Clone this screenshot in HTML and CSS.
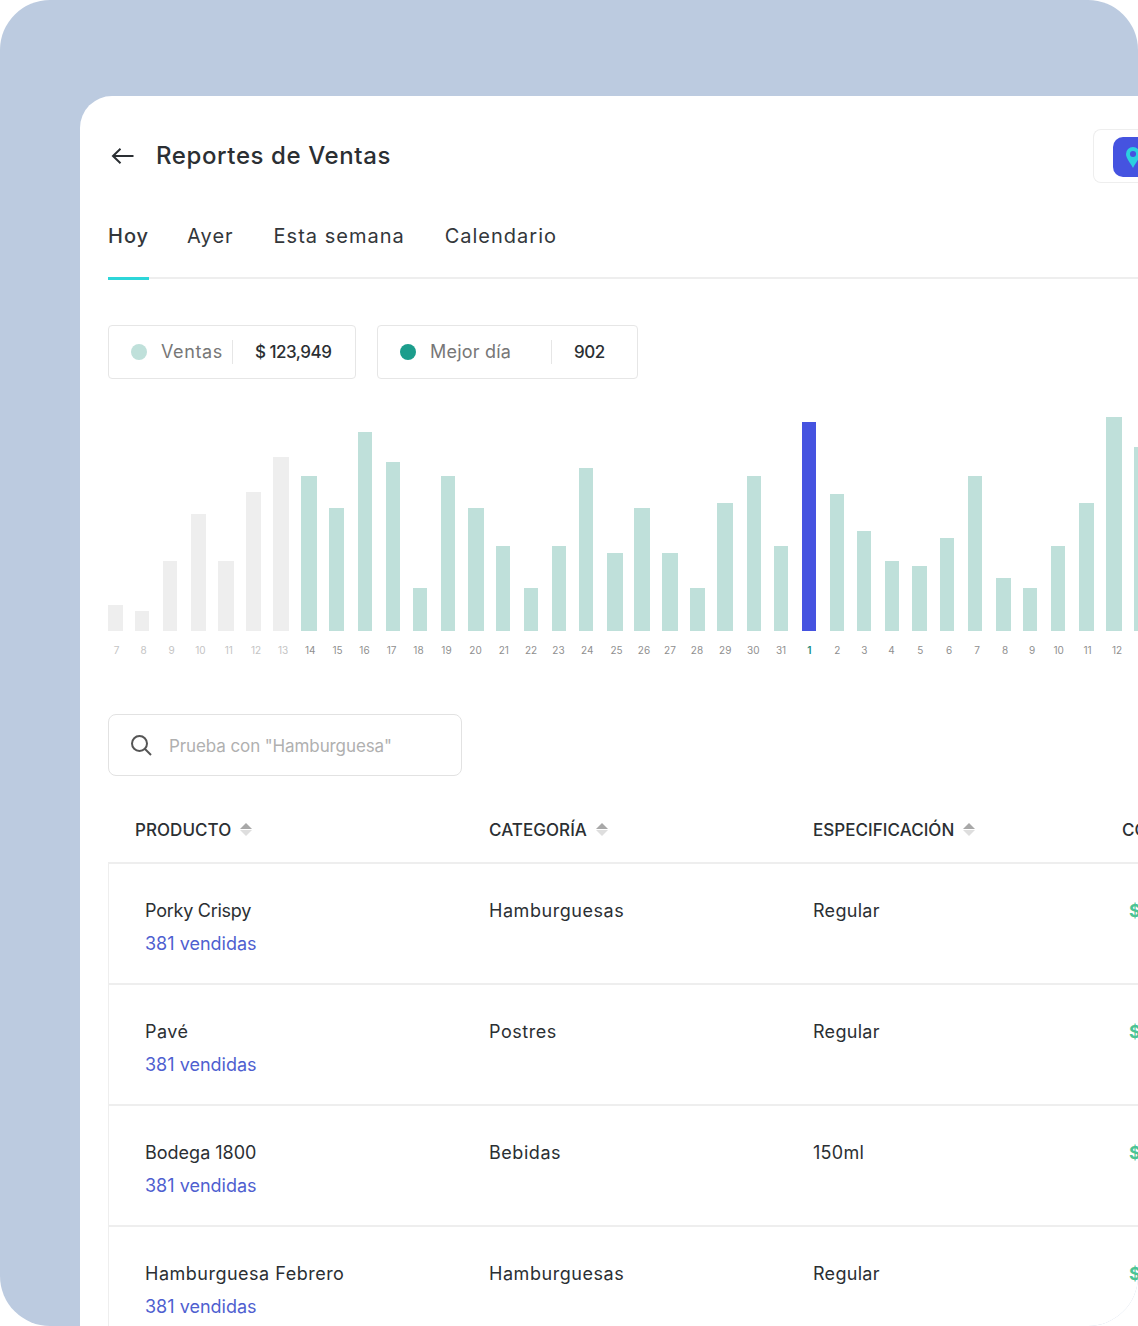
FILE: index.html
```html
<!DOCTYPE html>
<html>

<head>
    <title>Reportes de Ventas</title>
    <link rel="stylesheet" href="styles.css">
</head>

<body>
    <div class="frame">
        <div class="card">
            <div class="header">
                <div class="title-group">
                    <svg class="back-icon" width="23" height="18" viewBox="0 0 23 18">
                        <path d="M22.500 9H2M9.500 1.800 2 9l7.500 7.200" fill="none" stroke="#2b2f33" stroke-width="2"/>
                    </svg>
                    <h1>Reportes de Ventas</h1>
                </div>
                <div class="location">
                    <div class="location-btn">
                        <svg width="14" height="21" viewBox="0 0 16 24">
                            <path d="M8 0a8 8 0 0 1 8 8c0 5-5 10-8 16C5 18 0 13 0 8a8 8 0 0 1 8-8z" fill="#2bd0e0"/>
                            <circle cx="8" cy="8" r="3.500" fill="#4553e0"/>
                        </svg>
                    </div>
                </div>
            </div>

            <div class="tabs">
                <span class="tab active">Hoy</span>
                <span class="tab">Ayer</span>
                <span class="tab">Esta semana</span>
                <span class="tab">Calendario</span>
            </div>

            <div class="stats">
                <div class="stat stat-sales">
                    <span class="dot dot-light"></span>
                    <span class="stat-label">Ventas</span>
                    <span class="stat-value">$ 123,949</span>
                </div>
                <div class="stat stat-best">
                    <span class="dot dot-dark"></span>
                    <span class="stat-label">Mejor día</span>
                    <span class="stat-value">902</span>
                </div>
            </div>

            <div class="chart">
                <div class="bar old" style="height: 26px; width: 15px; margin-right: 12px"></div>
                <div class="bar old" style="height: 20px; width: 14px; margin-right: 14px"></div>
                <div class="bar old" style="height: 70px; width: 14px; margin-right: 14px"></div>
                <div class="bar old" style="height: 117px; width: 15px; margin-right: 12px"></div>
                <div class="bar old" style="height: 70px; width: 16px; margin-right: 12px"></div>
                <div class="bar old" style="height: 139px; width: 15px; margin-right: 12px"></div>
                <div class="bar old" style="height: 174px; width: 16px; margin-right: 12px"></div>
                <div class="bar" style="height: 155px; width: 16px; margin-right: 12px"></div>
                <div class="bar" style="height: 123px; width: 15px; margin-right: 14px"></div>
                <div class="bar" style="height: 199px; width: 14px; margin-right: 14px"></div>
                <div class="bar" style="height: 169px; width: 14px; margin-right: 13px"></div>
                <div class="bar" style="height: 43px; width: 14px; margin-right: 14px"></div>
                <div class="bar" style="height: 155px; width: 14px; margin-right: 13px"></div>
                <div class="bar" style="height: 123px; width: 16px; margin-right: 12px"></div>
                <div class="bar" style="height: 85px; width: 14px; margin-right: 14px"></div>
                <div class="bar" style="height: 43px; width: 14px; margin-right: 14px"></div>
                <div class="bar" style="height: 85px; width: 14px; margin-right: 13px"></div>
                <div class="bar" style="height: 163px; width: 14px; margin-right: 14px"></div>
                <div class="bar" style="height: 78px; width: 16px; margin-right: 11px"></div>
                <div class="bar" style="height: 123px; width: 16px; margin-right: 12px"></div>
                <div class="bar" style="height: 78px; width: 16px; margin-right: 12px"></div>
                <div class="bar" style="height: 43px; width: 15px; margin-right: 12px"></div>
                <div class="bar" style="height: 128px; width: 16px; margin-right: 14px"></div>
                <div class="bar" style="height: 155px; width: 14px; margin-right: 13px"></div>
                <div class="bar" style="height: 85px; width: 14px; margin-right: 14px"></div>
                <div class="bar today" style="height: 209px; width: 14px; margin-right: 14px"></div>
                <div class="bar" style="height: 137px; width: 14px; margin-right: 13px"></div>
                <div class="bar" style="height: 100px; width: 14px; margin-right: 14px"></div>
                <div class="bar" style="height: 70px; width: 14px; margin-right: 13px"></div>
                <div class="bar" style="height: 65px; width: 15px; margin-right: 13px"></div>
                <div class="bar" style="height: 93px; width: 14px; margin-right: 14px"></div>
                <div class="bar" style="height: 155px; width: 14px; margin-right: 14px"></div>
                <div class="bar" style="height: 53px; width: 15px; margin-right: 12px"></div>
                <div class="bar" style="height: 43px; width: 14px; margin-right: 14px"></div>
                <div class="bar" style="height: 85px; width: 14px; margin-right: 14px"></div>
                <div class="bar" style="height: 128px; width: 15px; margin-right: 12px"></div>
                <div class="bar" style="height: 214px; width: 16px; margin-right: 12px"></div>
                <div class="bar" style="height: 184px; width: 15px; margin-right: 12px"></div>
            </div>

            <div class="days">
                <span class="old" style="width: 27px">7</span>
                <span class="old" style="width: 27px">8</span>
                <span class="old" style="width: 29px">9</span>
                <span class="old" style="width: 29px">10</span>
                <span class="old" style="width: 27.500px">11</span>
                <span class="old" style="width: 27px">12</span>
                <span class="old" style="width: 27px">13</span>
                <span style="width: 27.500px">14</span>
                <span style="width: 27px">15</span>
                <span style="width: 27px">16</span>
                <span style="width: 27px">17</span>
                <span style="width: 27px">18</span>
                <span style="width: 29px">19</span>
                <span style="width: 29px">20</span>
                <span style="width: 27.500px">21</span>
                <span style="width: 27px">22</span>
                <span style="width: 28px">23</span>
                <span style="width: 29.500px">24</span>
                <span style="width: 29px">25</span>
                <span style="width: 26px">26</span>
                <span style="width: 26px">27</span>
                <span style="width: 28px">28</span>
                <span style="width: 28.500px">29</span>
                <span style="width: 27.500px">30</span>
                <span style="width: 28px">31</span>
                <span class="today" style="width: 28.500px">1</span>
                <span style="width: 27.500px">2</span>
                <span style="width: 26.500px">3</span>
                <span style="width: 28px">4</span>
                <span style="width: 29.500px">5</span>
                <span style="width: 28px">6</span>
                <span style="width: 28px">7</span>
                <span style="width: 28px">8</span>
                <span style="width: 26px">9</span>
                <span style="width: 27.500px">10</span>
                <span style="width: 30px">11</span>
                <span style="width: 29px">12</span>
            </div>

            <div class="search">
                <svg width="22" height="22" viewBox="0 0 22 22">
                    <circle cx="9.500" cy="9.500" r="7.500" fill="none" stroke="#555" stroke-width="2"/>
                    <path d="M15 15l6 6" stroke="#555" stroke-width="2"/>
                </svg>
                <span class="placeholder">Prueba con "Hamburguesa"</span>
            </div>

            <div class="table-head">
                <div class="head-cell">PRODUCTO <span class="sort"><i class="up"></i><i class="down"></i></span></div>
                <div class="head-cell">CATEGORÍA <span class="sort"><i class="up"></i><i class="down"></i></span></div>
                <div class="head-cell">ESPECIFICACIÓN <span class="sort"><i class="up"></i><i class="down"></i></span></div>
                <div class="head-cell">COSTO</div>
            </div>

            <div class="table-body">
                <div class="row">
                    <div class="product">
                        <div class="name-tight">Porky Crispy</div>
                        <div class="sold">381 vendidas</div>
                    </div>
                    <div class="category">Hamburguesas</div>
                    <div class="spec">Regular</div>
                    <div class="price">$120</div>
                </div>
                <div class="row">
                    <div class="product">
                        <div class="name-wide">Pavé</div>
                        <div class="sold">381 vendidas</div>
                    </div>
                    <div class="category">Postres</div>
                    <div class="spec">Regular</div>
                    <div class="price">$120</div>
                </div>
                <div class="row">
                    <div class="product">
                        <div>Bodega 1800</div>
                        <div class="sold">381 vendidas</div>
                    </div>
                    <div class="category">Bebidas</div>
                    <div class="spec">150ml</div>
                    <div class="price">$120</div>
                </div>
                <div class="row">
                    <div class="product">
                        <div class="name-wide">Hamburguesa Febrero</div>
                        <div class="sold">381 vendidas</div>
                    </div>
                    <div class="category">Hamburguesas</div>
                    <div class="spec">Regular</div>
                    <div class="price">$120</div>
                </div>
            </div>
        </div>
    </div>
</body>

</html>
```

FILE: styles.css
```css
html,
body {
    margin: 0;
    height: 1326px;
    overflow: hidden;
    background-color: white;
    font-family: Inter, Arial, sans-serif;
    color: #2b2f33;
}

.frame {
    width: 1138px;
    height: 1326px;
    box-sizing: border-box;
    padding: 96px 0 0 80px;
    background-color: #bccbe0;
    border-radius: 50px;
    overflow: hidden;
}

.card {
    width: 1058px;
    height: 1230px;
    box-sizing: border-box;
    padding: 33px 0 0 28px;
    background-color: white;
    border-radius: 32px 0 0 0;
    overflow: hidden;
}

.header {
    display: flex;
    justify-content: space-between;
    align-items: center;
    height: 54px;
}

.title-group {
    display: flex;
    align-items: center;
    gap: 22px;
    padding-left: 3px;
}

h1 {
    margin: 0 0 2px;
    font-size: 24px;
    font-weight: 500;
    letter-spacing: 0.6px;
}

.location {
    width: 45px;
    height: 54px;
    box-sizing: border-box;
    padding: 7px 0 0 19px;
    border: 1px solid #eeeeee;
    border-right: none;
    border-radius: 8px 0 0 8px;
}

.location-btn {
    width: 60px;
    height: 40px;
    display: flex;
    align-items: center;
    padding-left: 13px;
    box-sizing: border-box;
    background-color: #4553e0;
    border-radius: 10px 0 0 10px;
}

.tabs {
    display: flex;
    gap: 40px;
    margin-top: 26px;
    height: 68px;
    border-bottom: 2px solid #eeeeee;
    box-sizing: content-box;
}

.tab {
    height: 68px;
    box-sizing: content-box;
    padding-top: 12px;
    font-size: 20px;
    line-height: 30px;
    letter-spacing: 1px;
    color: #33373b;
}

.tab.active {
    height: 41px;
    margin-right: -2px;
    padding-top: 12px;
    padding-bottom: 15px;
    font-weight: 500;
    border-bottom: 3px solid #2dd6d9;
}

.stats {
    display: flex;
    gap: 21px;
    margin-top: 46px;
}

.stat {
    display: flex;
    align-items: center;
    height: 54px;
    box-sizing: border-box;
    border: 1px solid #e6e6e6;
    border-radius: 4px;
    font-size: 18px;
}

.stat-sales {
    width: 248px;
}

.stat-best {
    width: 261px;
}

.dot {
    flex: none;
    width: 16px;
    height: 16px;
    margin: 0 14px 0 22px;
    border-radius: 50%;
}

.dot-light {
    background-color: #bfe0da;
}

.dot-dark {
    background-color: #1c9d8c;
}

.stat-label {
    color: #777777;
    height: 24px;
    line-height: 24px;
    border-right: 1px solid #e6e6e6;
}

.stat-sales .stat-label {
    width: 71px;
    letter-spacing: 0.6px;
}

.stat-best .stat-label {
    width: 121px;
    letter-spacing: 0.2px;
}

.stat-value {
    padding-left: 22px;
    font-size: 17px;
    font-weight: 500;
    letter-spacing: -0.5px;
    color: #2b2f33;
}

.chart {
    display: flex;
    align-items: flex-end;
    height: 214px;
    margin-top: 38px;
    width: 1060px;
}

.bar {
    flex: none;
    background-color: #bfe0da;
}

.bar.old {
    background-color: #eeeeee;
}

.bar.today {
    background-color: #4553e0;
}

.days {
    display: flex;
    margin: 11px 0 0 -5px;
    font-size: 10px;
    line-height: 16px;
    color: #8f8f8f;
}

.days span {
    flex: none;
    text-align: center;
}

.days .old {
    color: #c4c4c4;
}

.days .today {
    color: #1c8c7c;
    font-weight: 600;
}

.search {
    display: flex;
    align-items: center;
    gap: 17px;
    width: 354px;
    height: 62px;
    box-sizing: border-box;
    margin-top: 56px;
    padding-left: 21px;
    border: 1.500px solid #e2e2e2;
    border-radius: 8px;
}

.placeholder {
    padding-top: 1px;
    font-size: 17px;
    letter-spacing: -0.1px;
    color: #b0b0b0;
}

.table-head,
.row {
    display: grid;
    grid-template-columns: 381px 324px 309px 200px;
}

.table-head {
    height: 88px;
    align-items: center;
    font-size: 17px;
    font-weight: 500;
    letter-spacing: 0.05px;
    border-bottom: 2px solid #eeeeee;
    box-sizing: border-box;
    width: 1100px;
}

.head-cell {
    display: flex;
    align-items: center;
    gap: 9px;
    padding-top: 21px;
}

.head-cell:first-child {
    padding-left: 27px;
}

.sort {
    display: flex;
    flex-direction: column;
    gap: 1px;
}

.sort i {
    display: block;
    width: 0;
    height: 0;
    border-left: 6px solid transparent;
    border-right: 6px solid transparent;
}

.sort .up {
    border-bottom: 6px solid #a8a8a8;
}

.sort .down {
    border-top: 6px solid #dedede;
}

.table-body {
    border-left: 1px solid #eeeeee;
    width: 1100px;
}

.row {
    height: 121px;
    box-sizing: border-box;
    margin-left: -1px;
    padding-top: 32px;
    font-size: 18px;
    line-height: 30px;
    border-bottom: 2px solid #eeeeee;
}

.product {
    padding-left: 37px;
}

.name-tight {
    letter-spacing: -0.25px;
}

.name-wide {
    letter-spacing: 0.5px;
}

.category {
    letter-spacing: 0.55px;
}

.spec {
    letter-spacing: 0.3px;
}

.sold {
    margin-top: 3px;
    color: #4f5fd0;
}

.price {
    padding-left: 7px;
    font-weight: 700;
    color: #4bc495;
}
```
